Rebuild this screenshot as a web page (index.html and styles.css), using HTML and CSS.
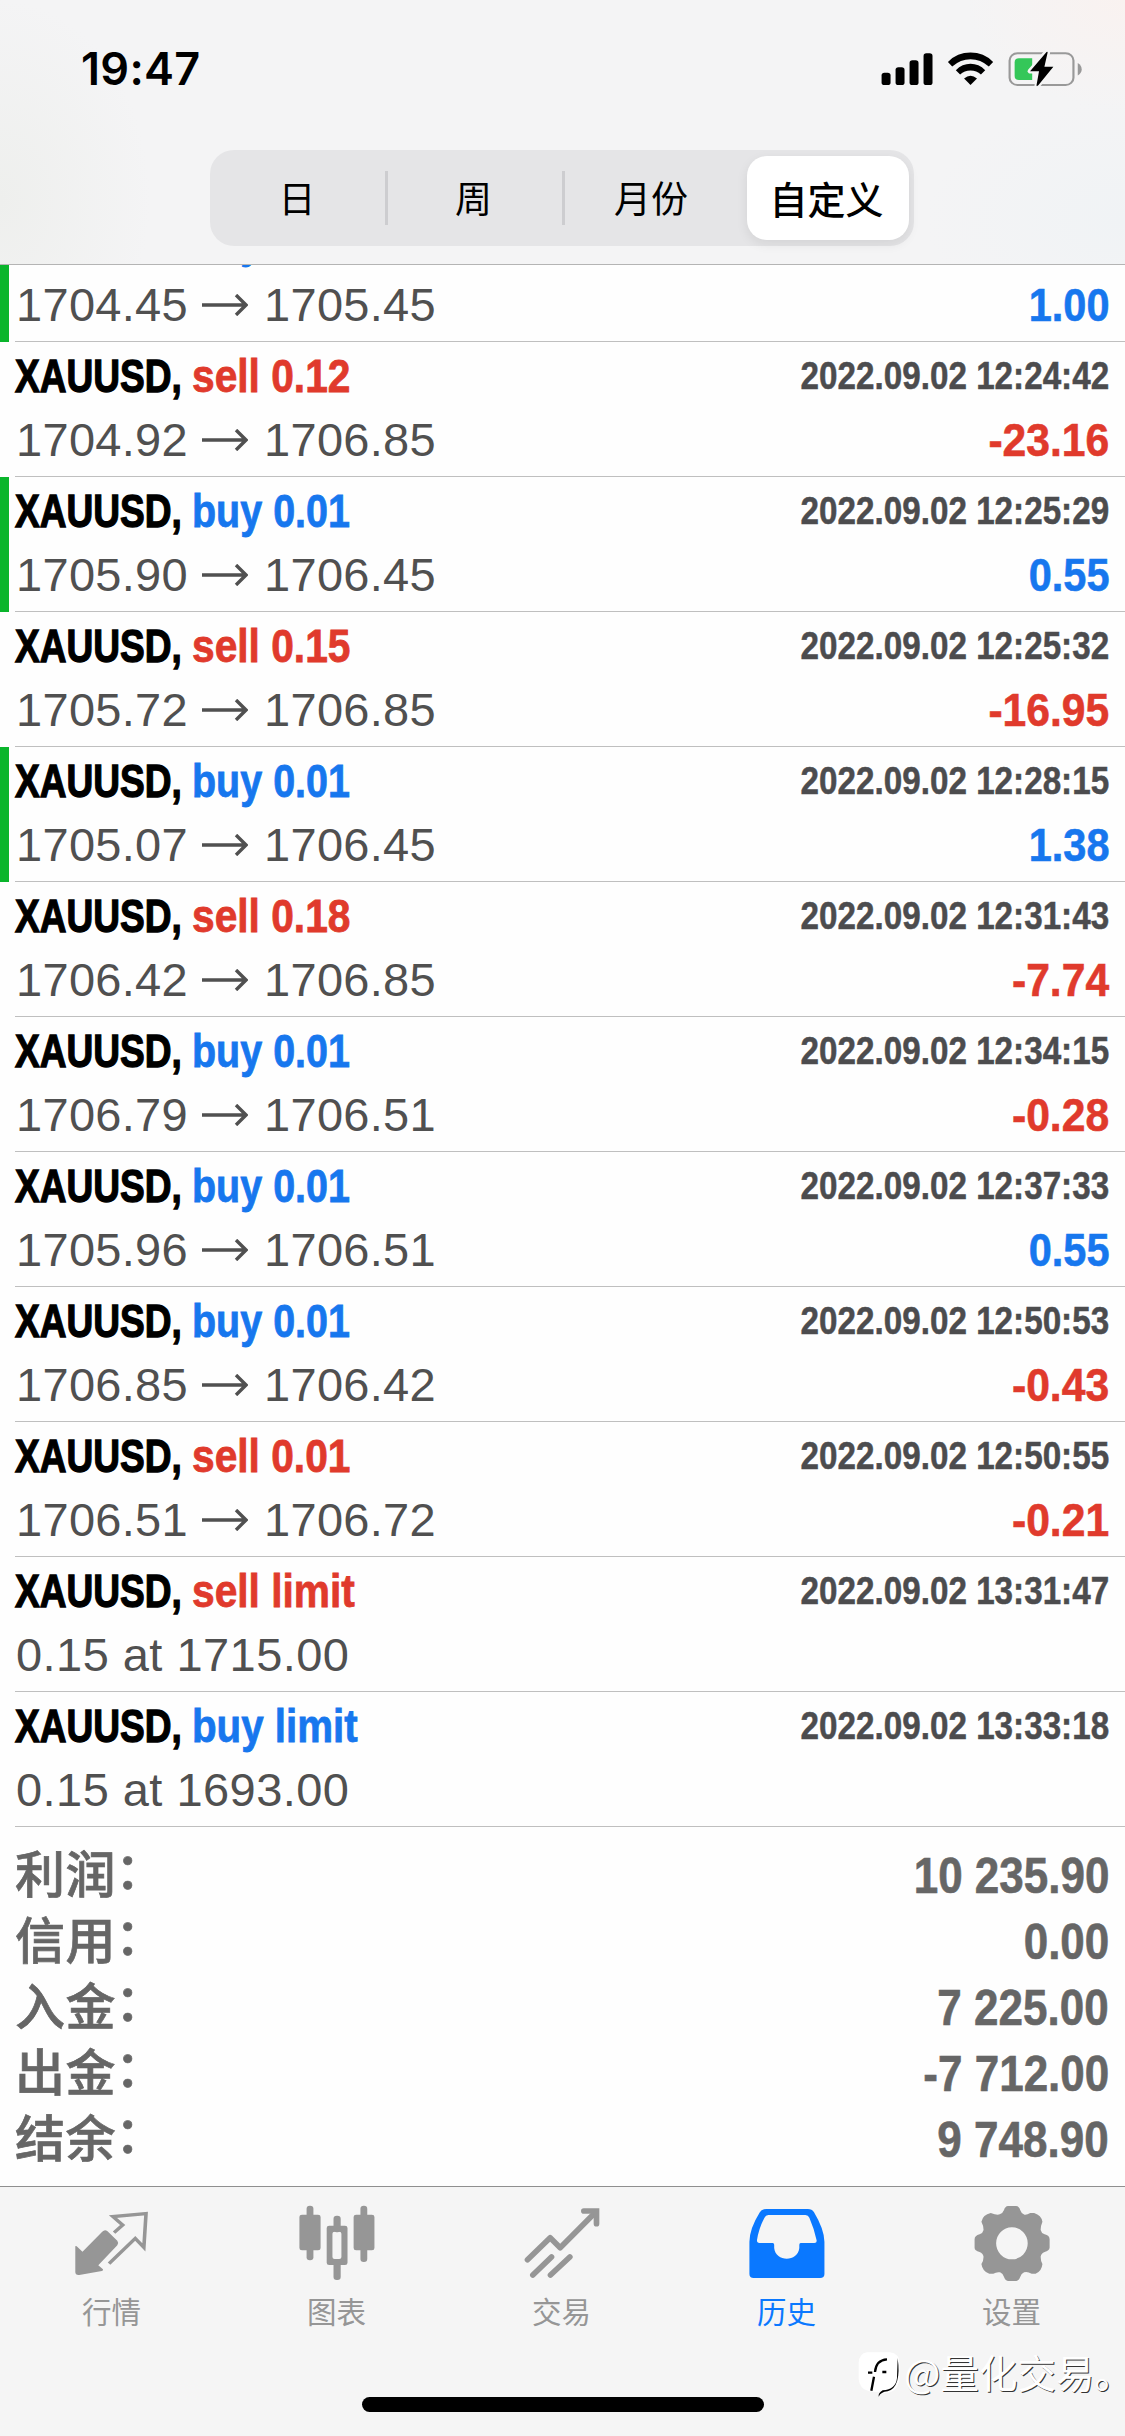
FILE: index.html
```html
<!DOCTYPE html>
<html lang="zh-CN">
<head>
<meta charset="utf-8">
<title>历史</title>
<link rel="stylesheet" href="styles.css">
</head>
<body>
<div class="screen">
  <header class="header">
    <div class="status">
      <span class="clock">19:47</span>
      <svg class="status-icons" viewBox="880 140 580 130" preserveAspectRatio="none">
        <rect x="890" y="218" width="25" height="37" rx="8"/>
        <rect x="929" y="201" width="25" height="54" rx="8"/>
        <rect x="968" y="180" width="25" height="75" rx="8"/>
        <rect x="1007" y="159" width="25" height="96" rx="8"/>
        <path d="M1075 185Q1101 157 1138 157T1201 185L1189 199Q1166 177 1138 177T1087 199Z"/>
        <path d="M1097 210Q1115 191 1138 191T1179 210L1167 223Q1155 211 1138 211T1109 223Z"/>
        <path d="M1120 235Q1138 219 1156 235L1138 255Z"/>
        <rect x="1247" y="159" width="178" height="96" rx="22" fill="none" stroke="#999" stroke-width="6"/>
        <path d="M1437 188Q1448 195 1448 207T1437 226Z" fill="#999"/>
        <path d="M1273 174H1310V240H1273Q1261 240 1261 227V187Q1261 174 1273 174Z" fill="#34c759"/>
        <path d="M1350 155L1304 213H1329L1323 260L1369 200H1344L1353 157Z" stroke="#f5f5f5" stroke-width="14" stroke-linejoin="round"/>
        <path d="M1350 155L1304 213H1329L1322 256Q1322 261 1327 256L1369 200H1344L1353 157Q1353 153 1350 155Z"/>
      </svg>
    </div>
    <nav class="segments">
      <span class="segment">日</span>
      <span class="segment divided">周</span>
      <span class="segment divided">月份</span>
      <span class="segment selected">自定义</span>
    </nav>
  </header>

  <main class="deals">
    <div class="deal clipped tp"><div class="deal-body">
      <div class="line"><span class="title"><span class="sym">XAUUSD,</span><span class="side buy">buy 0.01</span></span></div>
      <div class="line"><span class="price">1704.45<svg class="arrow" viewBox="0 0 46 22"><path d="M0 11H44M34 1L44 11L34 21"/></svg>1705.45</span><span class="profit buy">1.00</span></div>
    </div></div>
    <div class="deal"><div class="deal-body">
      <div class="line"><span class="title"><span class="sym">XAUUSD,</span><span class="side sell">sell 0.12</span></span><span class="date">2022.09.02 12:24:42</span></div>
      <div class="line"><span class="price">1704.92<svg class="arrow" viewBox="0 0 46 22"><path d="M0 11H44M34 1L44 11L34 21"/></svg>1706.85</span><span class="profit sell">-23.16</span></div>
    </div></div>
    <div class="deal tp"><div class="deal-body">
      <div class="line"><span class="title"><span class="sym">XAUUSD,</span><span class="side buy">buy 0.01</span></span><span class="date">2022.09.02 12:25:29</span></div>
      <div class="line"><span class="price">1705.90<svg class="arrow" viewBox="0 0 46 22"><path d="M0 11H44M34 1L44 11L34 21"/></svg>1706.45</span><span class="profit buy">0.55</span></div>
    </div></div>
    <div class="deal"><div class="deal-body">
      <div class="line"><span class="title"><span class="sym">XAUUSD,</span><span class="side sell">sell 0.15</span></span><span class="date">2022.09.02 12:25:32</span></div>
      <div class="line"><span class="price">1705.72<svg class="arrow" viewBox="0 0 46 22"><path d="M0 11H44M34 1L44 11L34 21"/></svg>1706.85</span><span class="profit sell">-16.95</span></div>
    </div></div>
    <div class="deal tp"><div class="deal-body">
      <div class="line"><span class="title"><span class="sym">XAUUSD,</span><span class="side buy">buy 0.01</span></span><span class="date">2022.09.02 12:28:15</span></div>
      <div class="line"><span class="price">1705.07<svg class="arrow" viewBox="0 0 46 22"><path d="M0 11H44M34 1L44 11L34 21"/></svg>1706.45</span><span class="profit buy">1.38</span></div>
    </div></div>
    <div class="deal"><div class="deal-body">
      <div class="line"><span class="title"><span class="sym">XAUUSD,</span><span class="side sell">sell 0.18</span></span><span class="date">2022.09.02 12:31:43</span></div>
      <div class="line"><span class="price">1706.42<svg class="arrow" viewBox="0 0 46 22"><path d="M0 11H44M34 1L44 11L34 21"/></svg>1706.85</span><span class="profit sell">-7.74</span></div>
    </div></div>
    <div class="deal"><div class="deal-body">
      <div class="line"><span class="title"><span class="sym">XAUUSD,</span><span class="side buy">buy 0.01</span></span><span class="date">2022.09.02 12:34:15</span></div>
      <div class="line"><span class="price">1706.79<svg class="arrow" viewBox="0 0 46 22"><path d="M0 11H44M34 1L44 11L34 21"/></svg>1706.51</span><span class="profit sell">-0.28</span></div>
    </div></div>
    <div class="deal"><div class="deal-body">
      <div class="line"><span class="title"><span class="sym">XAUUSD,</span><span class="side buy">buy 0.01</span></span><span class="date">2022.09.02 12:37:33</span></div>
      <div class="line"><span class="price">1705.96<svg class="arrow" viewBox="0 0 46 22"><path d="M0 11H44M34 1L44 11L34 21"/></svg>1706.51</span><span class="profit buy">0.55</span></div>
    </div></div>
    <div class="deal"><div class="deal-body">
      <div class="line"><span class="title"><span class="sym">XAUUSD,</span><span class="side buy">buy 0.01</span></span><span class="date">2022.09.02 12:50:53</span></div>
      <div class="line"><span class="price">1706.85<svg class="arrow" viewBox="0 0 46 22"><path d="M0 11H44M34 1L44 11L34 21"/></svg>1706.42</span><span class="profit sell">-0.43</span></div>
    </div></div>
    <div class="deal"><div class="deal-body">
      <div class="line"><span class="title"><span class="sym">XAUUSD,</span><span class="side sell">sell 0.01</span></span><span class="date">2022.09.02 12:50:55</span></div>
      <div class="line"><span class="price">1706.51<svg class="arrow" viewBox="0 0 46 22"><path d="M0 11H44M34 1L44 11L34 21"/></svg>1706.72</span><span class="profit sell">-0.21</span></div>
    </div></div>
    <div class="deal"><div class="deal-body">
      <div class="line"><span class="title"><span class="sym">XAUUSD,</span><span class="side sell">sell limit</span></span><span class="date">2022.09.02 13:31:47</span></div>
      <div class="line"><span class="price pending">0.15 at 1715.00</span></div>
    </div></div>
    <div class="deal"><div class="deal-body">
      <div class="line"><span class="title"><span class="sym">XAUUSD,</span><span class="side buy limit">buy limit</span></span><span class="date">2022.09.02 13:33:18</span></div>
      <div class="line"><span class="price pending">0.15 at 1693.00</span></div>
    </div></div>
  </main>

  <section class="summary">
    <div class="sum"><span class="label">利润<span class="colon">：</span></span><span class="value">10 235.90</span></div>
    <div class="sum"><span class="label">信用<span class="colon">：</span></span><span class="value">0.00</span></div>
    <div class="sum"><span class="label">入金<span class="colon">：</span></span><span class="value">7 225.00</span></div>
    <div class="sum"><span class="label">出金<span class="colon">：</span></span><span class="value">-7 712.00</span></div>
    <div class="sum"><span class="label">结余<span class="colon">：</span></span><span class="value">9 748.90</span></div>
  </section>

  <footer class="footer">
    <nav class="tabs">
      <span class="tab">
        <svg class="tab-icon" viewBox="197 66 234 243" preserveAspectRatio="none">
          <path d="M209 199Q211 196 215 201L229 215L284 155Q291 147 298 153L326 182Q331 189 326 196L273 256L286 268Q288 272 283 273L220 285Q209 286 209 276Z" fill="currentColor"/>
          <path d="M317 158L341 135L314 110L406 101L400 202L376 175L303 251" fill="none" stroke="currentColor" stroke-width="10" stroke-linejoin="miter"/>
        </svg>
        <span class="tab-name">行情</span>
      </span>
      <span class="tab">
        <svg class="tab-icon" viewBox="824.5 66 234 243" preserveAspectRatio="none" fill="currentColor">
          <rect x="854" y="77" width="19" height="164" rx="9"/><rect x="834" y="104" width="59" height="107" rx="7"/>
          <rect x="1004" y="77" width="19" height="169" rx="9"/><rect x="985" y="104" width="58" height="107" rx="7"/>
          <rect x="929" y="107" width="20" height="50" rx="9"/><rect x="929" y="240" width="20" height="60" rx="9"/>
          <path fill-rule="evenodd" d="M917 137H961Q968 137 968 144V248Q968 255 961 255H917Q910 255 910 248V144Q910 137 917 137ZM932 155Q926 155 926 161V231Q926 237 932 237H945Q951 237 951 231V161Q951 155 945 155Z"/>
        </svg>
        <span class="tab-name">图表</span>
      </span>
      <span class="tab">
        <svg class="tab-icon" viewBox="61.5 36 252 243" preserveAspectRatio="none" fill="none" stroke="currentColor" stroke-width="17" stroke-linecap="round" stroke-linejoin="round">
          <path d="M81 209L149 143L179 173L285 67"/><path d="M250 63H288V101" stroke-linejoin="miter"/>
          <path d="M97 255L153 201M150 255L208 201"/>
        </svg>
        <span class="tab-name">交易</span>
      </span>
      <span class="tab active">
        <svg class="tab-icon" viewBox="509.5 66 234 243" preserveAspectRatio="none" fill="currentColor">
          <path fill-rule="evenodd" d="M566 87H682Q693 87 699 97Q727 147 728 185V282Q728 294 716 294H531Q519 294 519 282V185Q520 145 548 97Q554 87 566 87ZM572 105Q564 105 561 113Q545 146 540 181Q540 189 547 189H584Q588 189 588 194V204C592 247 654 247 658 204V194Q658 189 662 189H700Q708 188 706 180Q699 145 686 113Q683 105 675 105Z"/>
        </svg>
        <span class="tab-name">历史</span>
      </span>
      <span class="tab">
        <svg class="tab-icon" viewBox="1137 66 234 243" preserveAspectRatio="none" fill="currentColor">
          <path fill-rule="evenodd" d="M1240 78H1263Q1271 79 1274 90Q1277 101 1286 104Q1293 105 1302 99H1313Q1333 106 1336 125Q1331 137 1331 150Q1333 160 1342 163Q1356 166 1356 178V203Q1355 212 1342 216Q1333 219 1331 230Q1331 242 1336 252Q1334 274 1317 281H1306Q1294 274 1285 277Q1277 280 1274 291Q1271 302 1263 303H1240Q1232 302 1229 291Q1226 280 1218 277Q1208 275 1199 281H1188Q1169 275 1166 252Q1172 242 1172 230Q1170 219 1161 216Q1147 212 1147 203V178Q1147 167 1161 163Q1170 160 1172 150Q1172 137 1166 125Q1170 104 1192 99Q1209 106 1217 103Q1225 101 1229 90Q1232 79 1240 78ZM1251 142A44 48 0 1 0 1251 238A44 48 0 1 0 1251 142Z"/>
        </svg>
        <span class="tab-name">设置</span>
      </span>
    </nav>
    <div class="home"></div>
  </footer>

  <div class="watermark">
    <svg class="mark" viewBox="20 0 135 150">
      <path d="M50 13H118Q148 16 148 48V84Q147 132 105 135Q90 137 85 147Q82 136 95 129Q80 136 54 129Q27 122 25 92V45Q27 15 50 13Z" fill="#fff"/>
      <path d="M142 30Q154 118 112 130Q91 132 85 146Q83 135 97 127Q137 124 140 90Z" fill="#000"/>
      <path d="M53 74H66M96 72H108M74 72Q77 36 110 34M71 86L63 128" fill="none" stroke="#000" stroke-width="7"/>
    </svg>
    <span>@量化交易。</span>
  </div>
</div>
</body>
</html>
```
FILE: styles.css
```css
* { box-sizing: border-box; }
body { margin: 0; background: #fff; }
.screen {
  position: relative;
  display: flex;
  flex-direction: column;
  width: 1125px;
  height: 2436px;
  overflow: hidden;
  background: #fefefe;
  font-family: "Liberation Sans", "Noto Sans CJK SC", sans-serif;
}

/* header */
.header {
  flex: none;
  height: 265px;
  border-bottom: 1px solid #b4b4b4;
  background:
    radial-gradient(ellipse 150px 200px at 0 200px, #eeefed, transparent),
    radial-gradient(ellipse 160px 110px at 100% 0, #f9f2f0, transparent),
    radial-gradient(ellipse 200px 120px at 100% 220px, #f0f3f5, transparent),
    #f4f4f5;
}
.status {
  display: flex;
  justify-content: space-between;
  height: 150px;
  padding: 47px 39px 0 81px;
}
.clock {
  font: 600 45px/44px Inter, sans-serif;
  letter-spacing: 0.3px;
}
.status-icons { width: 208px; height: 43px; }
.segments {
  display: grid;
  grid-template-columns: 170px 177px 185px 162px;
  width: 704px;
  height: 96px;
  margin-left: 210px;
  padding: 6px 5px;
  border-radius: 24px;
  background: #e5e5e7;
}
.segment {
  display: flex;
  align-items: center;
  justify-content: center;
  padding: 0 3px 2px 0;
  font-size: 37px;
  font-family: "Noto Sans CJK SC", sans-serif;
}
.segment:first-child { padding-right: 6px; }
.segment:nth-child(2) { padding-right: 0; }
.segment:nth-child(3) { padding-right: 7px; }
.divided {
  background: linear-gradient(#cdcdd0, #cdcdd0) left center / 3px 54px no-repeat;
}
.selected {
  border-radius: 20px;
  background: #fff;
  font-weight: 500;
  font-size: 38px;
  box-shadow: 0 4px 12px rgba(0, 0, 0, 0.08);
}

/* deals */
.deals { flex: none; height: 1562px; overflow: hidden; }
.deal { height: 135px; padding-left: 15px; }
.clipped { margin-top: -58px; }
.tp { background: linear-gradient(#0ab52c, #0ab52c) left / 9px 100% no-repeat; }
.deal-body {
  height: 135px;
  padding-top: 2px;
  border-bottom: 1px solid #bfbfbf;
}
.line {
  display: flex;
  justify-content: space-between;
  height: 64px;
  padding-right: 16px;
  font-size: 47px;
  line-height: 63px;
  white-space: nowrap;
}
.title { display: flex; font-weight: 700; }
.sym {
  width: 177px;
  transform: scaleX(0.789);
  transform-origin: left;
  -webkit-text-stroke: 1.3px;
}
.side { transform-origin: left; -webkit-text-stroke: 0.8px; }
.side.sell { transform: scaleX(0.866); }
.side.buy { transform: scaleX(0.84); }
.side.limit { transform: scaleX(0.857); }
.buy { color: #1777ee; }
.sell { color: #e03a2c; }
.date {
  color: #4c4c4e;
  font-size: 39px;
  font-weight: 700;
  transform: scaleX(0.852);
  transform-origin: right;
  -webkit-text-stroke: 0.5px;
}
.price { padding-left: 1px; color: #505050; letter-spacing: 0.3px; }
.pending { letter-spacing: 0.45px; }
.arrow {
  width: 46px;
  height: 22px;
  margin: 0 16px 5px 14px;
  fill: none;
  stroke: #505050;
  stroke-width: 3.4;
}
.profit {
  font-weight: 700;
  transform: scaleX(0.883);
  transform-origin: right;
  -webkit-text-stroke: 0.6px;
}
.profit.sell { transform: scaleX(0.907); }

/* totals */
.summary {
  flex: none;
  height: 360px;
  padding: 16px 16px 0 15px;
  border-bottom: 1px solid #8f8f8f;
  color: #666;
  font-weight: 700;
}
.sum {
  display: flex;
  justify-content: space-between;
  height: 66px;
  font-size: 50px;
  line-height: 66px;
}
.label {
  margin-top: -5px;
  font-weight: 500;
  font-family: "Noto Sans CJK SC", sans-serif;
  letter-spacing: 0.6px;
  -webkit-text-stroke: 0.7px;
}
.colon { position: relative; top: -4px; left: -1px; }
.value { transform: scaleX(0.88); transform-origin: right; -webkit-text-stroke: 0.6px; }

/* tab bar */
.footer { flex: 1; background: #f5f5f5; }
.tabs { display: grid; grid-template-columns: repeat(5, 225px); height: 210px; }
.tab {
  display: flex;
  flex-direction: column;
  align-items: center;
  gap: 7px;
  padding-top: 15px;
  color: #969696;
  font: 29.5px/40px "Noto Sans CJK SC", sans-serif;
}
.tab-icon { width: 84px; height: 81px; }
.tab-name { margin-left: -2px; }
.active { color: #0a78ff; }
.home {
  width: 402px;
  height: 15px;
  margin: 0 auto;
  border-radius: 8px;
  background: #000;
}

.watermark {
  position: absolute;
  left: 857px;
  top: 2348px;
  display: flex;
  color: #fff;
  font: 38.5px/46px "Noto Sans CJK SC", sans-serif;
  white-space: nowrap;
  text-shadow: 1px 1px 0 #333;
}
.mark { width: 45px; height: 50px; margin-right: 2px; }
```
